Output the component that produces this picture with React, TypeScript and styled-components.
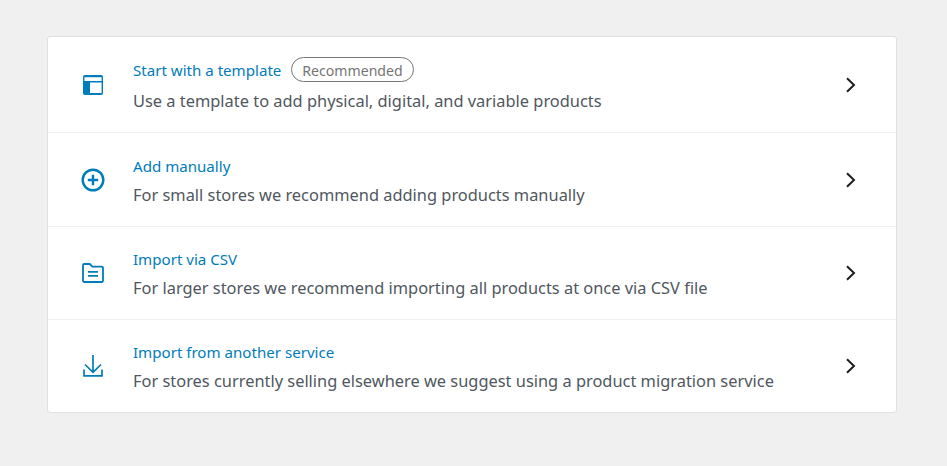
import React from 'react';
import styled, { createGlobalStyle } from 'styled-components';

const GlobalStyle = createGlobalStyle`
	html, body {
		margin: 0;
		background: #f0f0f0;
	}
	body {
		font-family: 'Noto Sans', 'Open Sans', sans-serif;
	}
`;

const Page = styled.div`
	width: 947px;
	height: 466px;
	box-sizing: border-box;
	padding: 36px 50px 0 47px;
`;

const Card = styled.div`
	background: #fff;
	border: 1px solid #e0e0e0;
	border-radius: 3px;
	padding-top: 1px;
`;

const Row = styled.div<{ $height: number; $last?: boolean }>`
	display: flex;
	align-items: center;
	height: ${(p) => p.$height}px;
	box-sizing: border-box;
	padding: 0 34px 0 33px;
	border-bottom: ${(p) => (p.$last ? 'none' : '1px solid #f0f0f0')};
`;

const IconBox = styled.div`
	display: flex;
	width: 24px;
	height: 24px;
	margin-right: 28px;
	color: #007cba;
`;

const Content = styled.div<{ $pad: string }>`
	flex: 1;
	display: flex;
	flex-direction: column;
	gap: 7px;
	padding: ${(p) => p.$pad};
`;

const TitleRow = styled.div<{ $badged: boolean }>`
	display: flex;
	align-items: center;
	gap: 10px;
	margin-bottom: ${(p) => (p.$badged ? 1 : 0)}px;
`;

const Title = styled.span<{ $badged: boolean }>`
	font-size: 15.1px;
	line-height: 22px;
	color: #007cba;
	padding-top: ${(p) => (p.$badged ? 2 : 0)}px;
`;

const Badge = styled.span`
	box-sizing: border-box;
	height: 25px;
	padding: 0 10px;
	border: 1px solid #757575;
	border-radius: 13px;
	font-size: 14.1px;
	line-height: 26px;
	color: #757575;
`;

const Description = styled.span`
	font-size: 16.4px;
	line-height: 22px;
	color: #50575e;
`;

const Chevron = styled.svg`
	width: 24px;
	height: 24px;
	fill: none;
	stroke: #1e1e1e;
	stroke-width: 2;
`;

const TemplateIcon = () => (
	<svg width="24" height="24" viewBox="0 0 24 24" fill="currentColor">
		<path
			fillRule="evenodd"
			d="M4 2h16a2 2 0 0 1 2 2v16a2 2 0 0 1-2 2H4a2 2 0 0 1-2-2V4a2 2 0 0 1 2-2zm-.6 2.300V8h17.200V4.300H3.400zM9 9.600V20h11.600V9.600H9z"
		/>
	</svg>
);

const PlusIcon = () => (
	<svg width="24" height="24" viewBox="0 0 24 24" fill="none" stroke="currentColor">
		<circle cx="12" cy="12" r="10.3" strokeWidth="2.4" />
		<path d="M12 6.8v10.4M6.8 12h10.4" strokeWidth="2.4" />
	</svg>
);

const FolderIcon = () => (
	<svg width="24" height="24" viewBox="0 0 24 24" fill="none" stroke="currentColor" strokeWidth="1.8">
		<path d="M2 4.200a1.200 1.200 0 0 1 1.200-1.200h5.600l2.600 2.600h9.400A1.200 1.200 0 0 1 22 6.800v13a1.200 1.200 0 0 1-1.200 1.200H3.200A1.200 1.200 0 0 1 2 19.800z" />
		<path d="M7 10.800h10M7 14.800h10" />
	</svg>
);

const DownloadIcon = () => (
	<svg width="24" height="24" viewBox="0 0 24 24" fill="none" stroke="currentColor" strokeWidth="1.7">
		<path d="M12 1v17M4 10.500 12 18.300 20 10.500" />
		<path d="M3 15.500v6.300h18v-6.300" />
	</svg>
);

const rows = [
	{
		height: 95,
		pad: '0 0 2px',
		icon: <TemplateIcon />,
		title: 'Start with a template',
		badge: 'Recommended',
		text: 'Use a template to add physical, digital, and variable products',
	},
	{
		height: 94,
		pad: '1px 0 0',
		icon: <PlusIcon />,
		title: 'Add manually',
		text: 'For small stores we recommend adding products manually',
	},
	{
		height: 93,
		pad: '1px 0 0',
		icon: <FolderIcon />,
		title: 'Import via CSV',
		text: 'For larger stores we recommend importing all products at once via CSV file',
	},
	{
		height: 92,
		pad: '0',
		icon: <DownloadIcon />,
		title: 'Import from another service',
		text: 'For stores currently selling elsewhere we suggest using a product migration service',
	},
];

const App = () => (
	<Page>
		<GlobalStyle />
		<Card>
			{rows.map((row, i) => (
				<Row key={row.title} $height={row.height} $last={i === rows.length - 1}>
					<IconBox>{row.icon}</IconBox>
					<Content $pad={row.pad}>
						<TitleRow $badged={!!row.badge}>
							<Title $badged={!!row.badge}>{row.title}</Title>
							{row.badge && <Badge>{row.badge}</Badge>}
						</TitleRow>
						<Description>{row.text}</Description>
					</Content>
					<Chevron viewBox="0 0 24 24">
						<path d="M9 5.200 16 12l-7 6.800" />
					</Chevron>
				</Row>
			))}
		</Card>
	</Page>
);

export default App;
